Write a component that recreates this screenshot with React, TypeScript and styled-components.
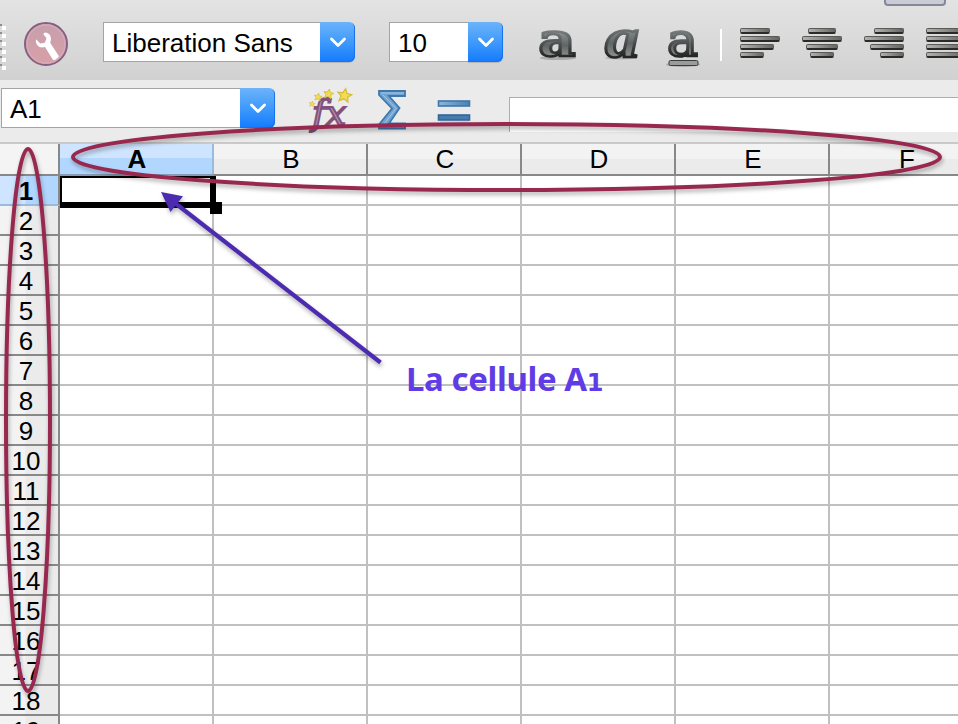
import React from "react";
import styled, { createGlobalStyle, css } from "styled-components";

const GlobalStyle = createGlobalStyle`
  *, *::before, *::after { box-sizing: border-box; }
  body { margin: 0; overflow: hidden; background: #fff; }
  svg { display: block; flex: none; overflow: visible; }
`;

const Window = styled.main`
  position: relative;
  display: flex;
  flex-direction: column;
  width: 958px;
  height: 724px;
  overflow: hidden;
  font-family: "Liberation Sans", Arial, sans-serif;
  font-size: 26px;
  color: #000;
`;

const Toolbar = styled.header`
  display: flex;
  flex: none;
  align-items: flex-start;
  height: 80px;
  padding-top: 22px;
  background: linear-gradient(#e3e3e3, #d1d1d1);
`;

const FormulaBar = styled.section`
  display: flex;
  flex: none;
  align-items: flex-start;
  height: 64px;
  padding: 8px 0 0 1px;
  background: #ebebeb;
  border-bottom: 2px solid #c9c9c9;
`;

const ComboBox = styled.div<{ $width: number; $gap?: number }>`
  display: flex;
  flex: none;
  width: ${(p) => p.$width}px;
  height: 40px;
  margin-left: ${(p) => p.$gap ?? 0}px;
`;

const ComboValue = styled.div`
  flex: 1;
  padding: 1px 0 0 8px;
  border: 1px solid #a4a4a4;
  border-right: 0;
  background: #fff;
  line-height: 38px;
  white-space: nowrap;
`;

const ComboButton = styled.button`
  display: grid;
  place-items: center;
  width: 35px;
  height: 40px;
  padding: 0;
  border: 0;
  border-radius: 0 6px 6px 0;
  background: linear-gradient(#6cb3fa, #3f9afb 50%, #147bff);
  box-shadow: inset -1px -1px 0 #1a73ee, 0 1px 1px rgba(0, 0, 0, 0.15);
`;

const IconSlot = styled.div<{ $gap: number; $top?: number }>`
  flex: none;
  margin: ${(p) => p.$top ?? 0}px 0 0 ${(p) => p.$gap}px;
`;

const Divider = styled.div`
  flex: none;
  width: 2px;
  height: 32px;
  margin: 7px 0 0 18px;
  background: #fff;
`;

const AlignStack = styled.div<{ $align: string; $gap: number }>`
  display: flex;
  flex: none;
  flex-direction: column;
  gap: 2px;
  align-items: ${(p) => p.$align};
  width: 40px;
  margin: 6px 0 0 ${(p) => p.$gap}px;
`;

const AlignBar = styled.span<{ $width: number }>`
  width: ${(p) => p.$width}px;
  height: 6px;
  border: 1px solid #5a5b58;
  border-bottom: 2px solid #2c2a28;
  border-radius: 2px;
  background: linear-gradient(90deg, #b0b3ad, #646662);
`;

const DockTab = styled.div`
  position: absolute;
  top: -8px;
  left: 884px;
  width: 62px;
  height: 14px;
  border: 2px solid #858898;
  border-radius: 4px;
  background: #c9ccd5;
`;

const FormulaInput = styled.div`
  flex: 1;
  height: 35px;
  margin: 9px 0 0 38px;
  border: solid #adadad;
  border-width: 1px 0 0 1px;
  background: #fff;
`;

const Sheet = styled.section`
  flex: none;
  display: flex;
  flex-direction: column;
`;

const HeaderRow = styled.div`
  display: flex;
  height: 32px;
`;

const Corner = styled.div`
  flex: none;
  width: 60px;
  background: #f4f4f4;
  border-right: 2px solid #888;
  border-bottom: 2px solid #888;
`;

const ColumnHeader = styled.div<{ $active: boolean }>`
  flex: none;
  width: 154px;
  border-bottom: 2px solid #888;
  background: linear-gradient(#f3f3f3 50%, #ebebeb 50%);
  line-height: 30px;
  text-align: center;
  box-shadow: inset -2px 0 0 #888;
  ${(p) =>
    p.$active &&
    css`
      background: linear-gradient(#cfe5ff 48%, #b2d7ff 48%);
      border-bottom-color: #889db5;
      box-shadow: inset -2px 0 0 #9bbbdd;
      font-weight: 700;
    `}
`;

const SheetRow = styled.div`
  display: flex;
  height: 30px;
`;

const RowHeader = styled.div<{ $active: boolean }>`
  flex: none;
  width: 60px;
  padding: 1px 6px 0 0;
  border-right: 2px solid #888;
  border-bottom: 2px solid #888;
  background: linear-gradient(90deg, #f3f3f3 25px, #ebebeb 26px);
  line-height: 28px;
  text-align: center;
  ${(p) =>
    p.$active &&
    css`
      background: linear-gradient(90deg, #cfe5ff 25px, #b2d7ff 26px);
      border-bottom-color: #9bbbdd;
      font-weight: 700;
    `}
`;

const Cell = styled.div`
  position: relative;
  flex: none;
  width: 154px;
  border-right: 2px solid #c0c0c0;
  border-bottom: 2px solid #c0c0c0;
  background: #fff;
`;

const Selection = styled.div`
  position: absolute;
  z-index: 1;
  top: 0;
  left: 0;
  width: 156px;
  height: 32px;
  border: solid #000;
  border-width: 2px 6px 6px 2px;
`;

const FillHandle = styled.div`
  position: absolute;
  top: 24px;
  left: 148px;
  width: 12px;
  height: 12px;
  background: #000;
`;

const Annotations = styled.svg`
  position: absolute;
  z-index: 2;
  top: 0;
  left: 0;
  filter: drop-shadow(1px 3px 2px rgba(0, 0, 0, 0.3));
`;

const Caption = styled.p`
  position: absolute;
  z-index: 3;
  top: 357px;
  left: 406px;
  margin: 0;
  color: #5f3ce6;
  font: 700 33px/44px "Noto Sans", sans-serif;
  letter-spacing: -0.4px;
  white-space: nowrap;
`;

const OldStyleDigit = styled.span`
  font: 700 24px/1 "DejaVu Sans", sans-serif;
`;

function Combo({ value, width, gap }: { value: string; width: number; gap?: number }) {
  return (
    <ComboBox $width={width} $gap={gap}>
      <ComboValue>{value}</ComboValue>
      <ComboButton aria-label={`${value} options`}>
        <svg width="18" height="12" viewBox="0 0 18 12">
          <path d="M2.500 3l6.500 6.500L15.500 3" fill="none" stroke="#fff" strokeWidth="2.800" strokeLinecap="round" strokeLinejoin="round" />
        </svg>
      </ComboButton>
    </ComboBox>
  );
}

function GripIcon() {
  return (
    <svg width="6" height="48" viewBox="0 0 6 48">
      {[0, 8, 16, 24, 32, 40].map((y) => (
        <g key={y}>
          <rect x="0" y={y} width="2" height="2" fill="#8f8f8f" />
          <rect x="2" y={y + 2} width="4" height="4" fill="#fff" />
        </g>
      ))}
    </svg>
  );
}

function WrenchIcon() {
  return (
    <svg width="46" height="46" viewBox="0 0 46 46">
      <defs>
        <linearGradient id="rose" x2="0" y2="1">
          <stop offset="0" stopColor="#c69fae" />
          <stop offset="1" stopColor="#d99fa7" />
        </linearGradient>
      </defs>
      <circle cx="23" cy="22" r="21" fill="url(#rose)" stroke="#876081" strokeWidth="2" />
      <circle cx="23" cy="22" r="19" fill="none" stroke="#d3abb8" strokeWidth="1.400" />
      <path
        d="M22 10.500c4 .2 6.600 3.500 5.800 7.500L27.300 21l8.200 12.500c.7 1-.2 2-1 2.600l-2.300 1.600c-1 .6-2 .4-2.600-.5L22 25c-5 1.600-9-1.400-9.200-6l.4-1.700 4 4.200 4.600-.8 1.700-4.400-3.300-4.300z"
        fill="#fff"
      />
    </svg>
  );
}

function MetalGradient() {
  return (
    <defs>
      <linearGradient id="metal" x1="0" y1="0" x2="0" y2="1">
        <stop offset="0.35" stopColor="#8d9393" />
        <stop offset="0.6" stopColor="#5f6464" />
        <stop offset="0.78" stopColor="#858988" />
      </linearGradient>
      <linearGradient id="metalEdge" x1="0" y1="0" x2="0" y2="1">
        <stop offset="0.35" stopColor="#747a7a" />
        <stop offset="0.8" stopColor="#262626" />
      </linearGradient>
    </defs>
  );
}

const Glyph = styled.text<{ $family: string; $weight: number; $italic?: boolean }>`
  font-family: "${(p) => p.$family}", serif;
  font-weight: ${(p) => p.$weight};
  font-style: ${(p) => (p.$italic ? "italic" : "normal")};
  fill: url(#metal);
  stroke: url(#metalEdge);
  stroke-width: 2.6px;
`;

function BoldIcon() {
  return (
    <svg width="40" height="46" viewBox="0 0 40 46">
      <MetalGradient />
      <ellipse cx="20" cy="36" rx="18" ry="2" fill="#aaa" />
      <Glyph $family="DejaVu Serif" $weight={700} x="0.500" y="34" fontSize="46" textLength="37" lengthAdjust="spacingAndGlyphs">a</Glyph>
    </svg>
  );
}

function ItalicIcon() {
  return (
    <svg width="40" height="46" viewBox="0 0 40 46">
      <ellipse cx="18" cy="36" rx="16" ry="1.500" fill="#b0b0b0" />
      <Glyph $family="Liberation Serif" $weight={700} $italic x="2" y="34.500" fontSize="57" textLength="34" lengthAdjust="spacingAndGlyphs">a</Glyph>
    </svg>
  );
}

function UnderlineIcon() {
  return (
    <svg width="36" height="46" viewBox="0 0 36 46">
      <Glyph $family="DejaVu Serif" $weight={400} x="1" y="33.500" fontSize="46" textLength="31" lengthAdjust="spacingAndGlyphs">a</Glyph>
      <ellipse cx="17" cy="42.500" rx="17" ry="2.500" fill="#aaa" />
      <rect x="3" y="38.500" width="29" height="5" rx="1.500" fill="#999c9c" stroke="#3b3d3d" />
    </svg>
  );
}

const FunctionGlyph = styled.text`
  font: italic 400 36px "DejaVu Serif", serif;
  fill: #b591b3;
  stroke: #80537e;
  stroke-width: 2px;
`;

function Star({ x, y, size }: { x: number; y: number; size: number }) {
  return (
    <path
      transform={`translate(${x} ${y}) rotate(10) scale(${size})`}
      d="M0-1L.3-.35 1-.3.48.15.65.85 0 .48-.65.85-.48.15-1-.3-.3-.35Z"
      fill="#f2dc55"
      stroke="#d9bd38"
      strokeWidth="0.18"
    />
  );
}

function FunctionIcon() {
  return (
    <svg width="46" height="44" viewBox="0 0 46 44">
      <FunctionGlyph x="4" y="37" textLength="34" lengthAdjust="spacingAndGlyphs">fx</FunctionGlyph>
      <Star x={4} y={16} size={3} />
      <Star x={10} y={9} size={4} />
      <Star x={20.500} y={6} size={5} />
      <Star x={36.500} y={7.500} size={7} />
    </svg>
  );
}

function SumIcon() {
  return (
    <svg width="32" height="44" viewBox="0 0 32 44">
      <path d="M2 3h26v5H12l10.500 12L12 35.500h16v5H2v-4L15 20.500 2 7z" fill="#70a4d2" stroke="#3f78ad" strokeWidth="1.800" />
      <path d="M4 5h23M6 7l13 13.500L7 36" fill="none" stroke="#a3c6e5" strokeWidth="1" />
    </svg>
  );
}

function EqualsIcon() {
  return (
    <svg width="34" height="26" viewBox="0 0 34 26">
      <defs>
        <linearGradient id="blueBar">
          <stop stopColor="#8bb7df" />
          <stop offset="1" stopColor="#4a80b3" />
        </linearGradient>
      </defs>
      <rect x="1.500" y="3" width="31" height="5" fill="url(#blueBar)" stroke="#3f76aa" strokeWidth="1.600" />
      <rect x="1.500" y="17" width="31" height="5" fill="#477cae" stroke="#34679a" strokeWidth="1.600" />
      <path d="M3 24h29" stroke="#d2d8de" strokeWidth="2" />
    </svg>
  );
}

const alignments = [
  { align: "flex-start", gap: 18, bars: [30, 40, 34, 24] },
  { align: "center", gap: 22, bars: [28, 40, 32, 24] },
  { align: "flex-end", gap: 22, bars: [30, 40, 34, 24] },
  { align: "flex-start", gap: 22, bars: [40, 40, 40, 40] },
];

const columns = ["A", "B", "C", "D", "E", "F"];
const rows = Array.from({ length: 19 }, (_, i) => i + 1);

export default function App() {
  return (
    <Window>
      <GlobalStyle />
      <Toolbar>
        <IconSlot $gap={0} $top={2}><GripIcon /></IconSlot>
        <IconSlot $gap={17}><WrenchIcon /></IconSlot>
        <Combo value="Liberation Sans" width={252} gap={34} />
        <Combo value="10" width={114} gap={34} />
        <IconSlot $gap={35}><BoldIcon /></IconSlot>
        <IconSlot $gap={25}><ItalicIcon /></IconSlot>
        <IconSlot $gap={23}><UnderlineIcon /></IconSlot>
        <Divider />
        {alignments.map((item, i) => (
          <AlignStack key={i} $align={item.align} $gap={item.gap}>
            {item.bars.map((width, j) => <AlignBar key={j} $width={width} />)}
          </AlignStack>
        ))}
      </Toolbar>
      <DockTab />

      <FormulaBar>
        <Combo value="A1" width={274} />
        <IconSlot $gap={33}><FunctionIcon /></IconSlot>
        <IconSlot $gap={23}><SumIcon /></IconSlot>
        <IconSlot $gap={28} $top={10}><EqualsIcon /></IconSlot>
        <FormulaInput />
      </FormulaBar>

      <Sheet>
        <HeaderRow>
          <Corner />
          {columns.map((name) => <ColumnHeader key={name} $active={name === "A"}>{name}</ColumnHeader>)}
        </HeaderRow>
        {rows.map((row) => (
          <SheetRow key={row}>
            <RowHeader $active={row === 1}>{row}</RowHeader>
            {columns.map((name) => (
              <Cell key={name}>
                {row === 1 && name === "A" && (
                  <Selection><FillHandle /></Selection>
                )}
              </Cell>
            ))}
          </SheetRow>
        ))}
      </Sheet>

      <Annotations width="958" height="724" viewBox="0 0 958 724" fill="none">
        <ellipse cx="506.500" cy="157" rx="433.500" ry="33" stroke="#982850" strokeWidth="4" />
        <ellipse cx="28" cy="420" rx="22" ry="271" stroke="#982850" strokeWidth="4" />
        <path d="M380.500 362.500L175 203" stroke="#4c2bb1" strokeWidth="4.200" />
        <path d="M161 192l22 4.300-12.500 15.700z" fill="#4c2bb1" />
      </Annotations>
      <Caption>La cellule A<OldStyleDigit>1</OldStyleDigit></Caption>
    </Window>
  );
}
